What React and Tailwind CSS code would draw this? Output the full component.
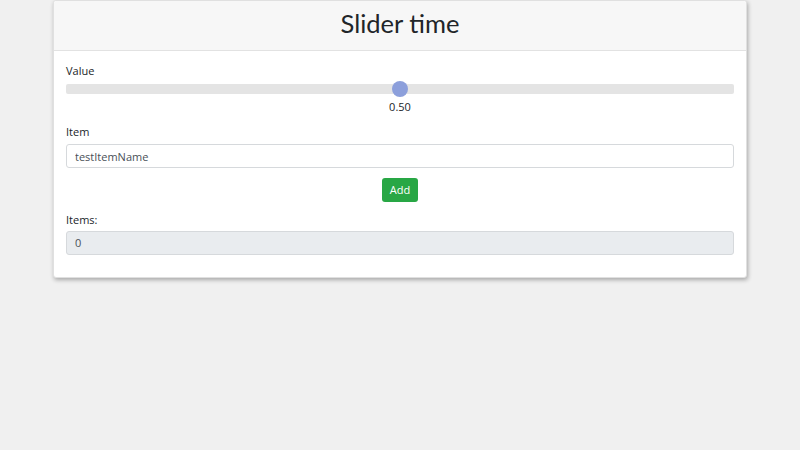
import { useState } from 'react';

export default function App() {
  const [value, setValue] = useState(0.5);
  const [item, setItem] = useState('testItemName');
  const [count, setCount] = useState(0);

  return (
    <div className="min-h-screen bg-[#f0f0f0] font-['Open_Sans','Noto_Sans',sans-serif] text-[#212529]">
      <div className="mx-auto w-[694px] bg-white rounded-[3px] border border-[#e0e0e0] shadow-[1px_2px_4px_rgba(0,0,0,0.3)]">
        <div className="h-[50px] flex items-center justify-center pb-[3px] bg-[#f7f7f7] border-b border-[#e2e2e2] rounded-t-[3px]">
          <h1 className="font-['Lato','Open_Sans',sans-serif] text-[25.5px] font-normal leading-none text-[#212529]">Slider time</h1>
        </div>

        <div className="px-[12px] pt-[13px] pb-[22px]">
          <label className="block text-[11px] leading-[13px] mb-[7px]">Value</label>
          <div className="relative h-[10px] bg-[#e4e4e4] rounded-[2px]">
            <div
              className="absolute top-1/2 w-[16px] h-[16px] -translate-x-1/2 -translate-y-1/2 rounded-full bg-[#8c9fdb]"
              style={{ left: `${value * 100}%` }}
            />
          </div>
          <div className="text-center text-[11px] mt-[6px] leading-[13px]">{value.toFixed(2)}</div>

          <label className="block text-[11px] leading-[13px] mt-[12px] mb-[6px]">Item</label>
          <input
            type="text"
            value={item}
            onChange={(e) => setItem(e.target.value)}
            className="block w-full h-[24px] px-[8px] text-[11px] text-[#495057] border border-[#d6d9dc] rounded-[3px] outline-none"
          />

          <div className="flex justify-center mt-[10px]">
            <button
              onClick={() => setCount((c) => c + 1)}
              className="h-[24px] px-[8px] text-[11px] text-white bg-[#28a745] rounded-[3px]"
            >
              Add
            </button>
          </div>

          <label className="block text-[11px] leading-[13px] mt-[11px] mb-[5px]">Items:</label>
          <div className="h-[24px] flex items-center px-[8px] text-[11px] text-[#495057] bg-[#e9ecef] border border-[#d6d9dc] rounded-[3px]">
            {count}
          </div>
        </div>
      </div>
    </div>
  );
}
